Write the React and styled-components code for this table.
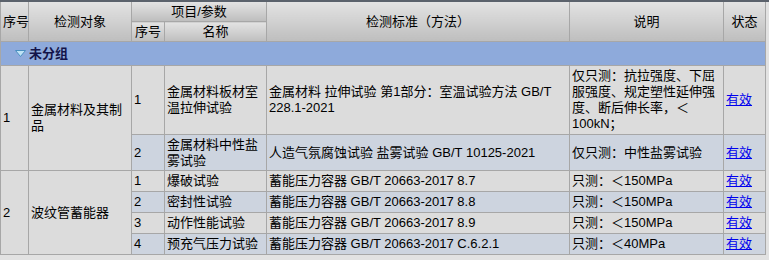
import styled, { createGlobalStyle } from "styled-components";

const GlobalStyle = createGlobalStyle`
body {
  margin: 0;
  background-color: #e2e2e2;
  font-family: "Liberation Sans", "Noto Sans CJK SC", sans-serif;
}
`;

const groups = [
  {
    no: "1",
    object: "金属材料及其制品",
    items: [
      {
        no: "1",
        name: "金属材料板材室温拉伸试验",
        standard: "金属材料 拉伸试验 第1部分：室温试验方法 GB/T 228.1-2021",
        note: "仅只测：抗拉强度、下屈服强度、规定塑性延伸强度、断后伸长率，＜100kN；",
        height: 69,
      },
      {
        no: "2",
        name: "金属材料中性盐雾试验",
        standard: "人造气氛腐蚀试验 盐雾试验 GB/T 10125-2021",
        note: "仅只测：中性盐雾试验",
        height: 36,
      },
    ],
  },
  {
    no: "2",
    object: "波纹管蓄能器",
    items: [
      { no: "1", name: "爆破试验", standard: "蓄能压力容器 GB/T 20663-2017 8.7", note: "只测：＜150MPa", height: 21 },
      { no: "2", name: "密封性试验", standard: "蓄能压力容器 GB/T 20663-2017 8.8", note: "只测：＜150MPa", height: 21 },
      { no: "3", name: "动作性能试验", standard: "蓄能压力容器 GB/T 20663-2017 8.9", note: "只测：＜150MPa", height: 21 },
      { no: "4", name: "预充气压力试验", standard: "蓄能压力容器 GB/T 20663-2017 C.6.2.1", note: "只测：＜40MPa", height: 21 },
    ],
  },
];

const DownArrow = () => (
  <svg width="11" height="7" viewBox="0 0 11 7">
    <path d="M0.5 0.5 H10.5 L5.5 6.5 Z" fill="#bfe3f5" stroke="#4a8fc0" strokeWidth="1" />
  </svg>
);

const App = () => {
  return (
    <>
      <GlobalStyle />
      <Frame>
        <Table>
          <colgroup>
            <col style={{ width: 28 }} />
            <col style={{ width: 103 }} />
            <col style={{ width: 33 }} />
            <col style={{ width: 102 }} />
            <col style={{ width: 303 }} />
            <col style={{ width: 154 }} />
            <col style={{ width: 42 }} />
          </colgroup>
          <thead>
            <tr>
              <HeadCell rowSpan={2}>序号</HeadCell>
              <HeadCell rowSpan={2}>检测对象</HeadCell>
              <HeadCell colSpan={2} $h={20}>项目/参数</HeadCell>
              <HeadCell rowSpan={2}>检测标准（方法）</HeadCell>
              <HeadCell rowSpan={2}>说明</HeadCell>
              <HeadCell rowSpan={2}>状态</HeadCell>
            </tr>
            <tr>
              <HeadCell $h={20}>序号</HeadCell>
              <HeadCell $h={20}>名称</HeadCell>
            </tr>
          </thead>
          <tbody>
            <tr>
              <GroupCell colSpan={7}>
                <GroupLabel>
                  <DownArrow />
                  未分组
                </GroupLabel>
              </GroupCell>
            </tr>
            {groups.map((g) =>
              g.items.map((item, i) => {
                const alt = i % 2 === 1;
                return (
                  <tr key={g.no + "-" + item.no}>
                    {i === 0 && (
                      <>
                        <Cell rowSpan={g.items.length}>{g.no}</Cell>
                        <Cell rowSpan={g.items.length}>{g.object}</Cell>
                      </>
                    )}
                    <Cell $alt={alt} $h={item.height}>{item.no}</Cell>
                    <Cell $alt={alt}>{item.name}</Cell>
                    <Cell $alt={alt}>{item.standard}</Cell>
                    <Cell $alt={alt}>{item.note}</Cell>
                    <Cell $alt={alt}>
                      <StatusLink href="#">有效</StatusLink>
                    </Cell>
                  </tr>
                );
              })
            )}
          </tbody>
        </Table>
      </Frame>
    </>
  );
};

export default App;

const Frame = styled.div`
width: 769px;
height: 260px;
overflow: hidden;
border-top: 2px solid #5b626c;
box-sizing: border-box;
`;

const Table = styled.table`
width: 765px;
table-layout: fixed;
border-collapse: collapse;
font-size: 13px;
line-height: 16px;
color: #000;
`;

const HeadCell = styled.th`
height: ${(p) => (p.$h ? `${p.$h - 1}px` : "auto")};
padding: 0 2px;
border: 1px solid #a7a7a7;
border-top: none;
background: linear-gradient(#e3e3e3, #bebebe);
font-weight: normal;
text-align: center;
vertical-align: middle;
white-space: nowrap;
`;

const GroupCell = styled.td`
height: 23px;
padding: 0 0 0 14px;
border: 1px solid #a7a7a7;
background-color: #8eaadb;
`;

const GroupLabel = styled.div`
display: flex;
align-items: center;
gap: 3px;
font-weight: bold;
color: #14144a;
`;

const Cell = styled.td`
height: ${(p) => (p.$h ? `${p.$h - 1}px` : "auto")};
padding: 0 2px;
border: 1px solid #a7a7a7;
background-color: ${(p) => (p.$alt ? "#cdd4df" : "#dcdcdc")};
vertical-align: middle;
`;

const StatusLink = styled.a`
color: #0000ee;
text-decoration: underline;
`;
